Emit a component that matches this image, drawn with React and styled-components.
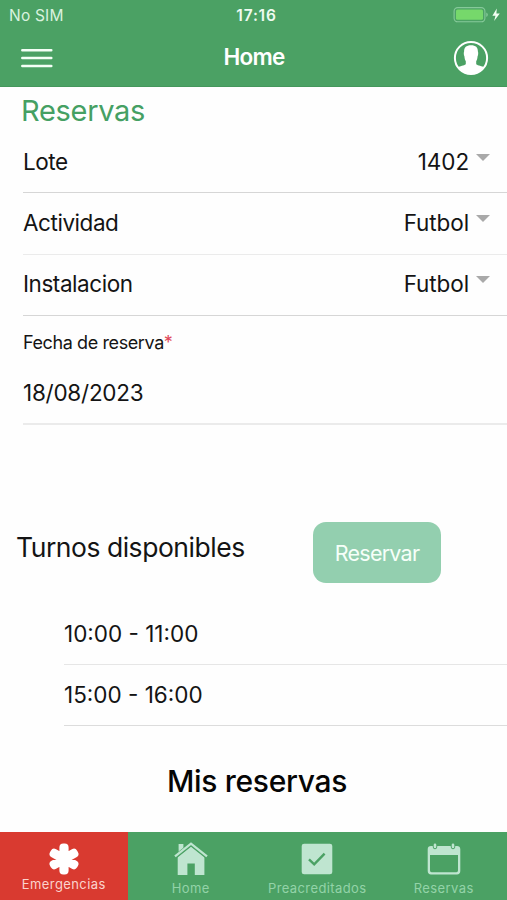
import React from 'react';
import styled, { createGlobalStyle } from 'styled-components';

const GlobalStyle = createGlobalStyle`
  * {
    box-sizing: border-box;
  }

  body {
    margin: 0;
    background: #fefefe;
    color: #141414;
    font-family: Inter, "Liberation Sans", sans-serif;
  }
`;

const selects = [
  { label: 'Lote', value: '1402', line: '#d6d6d6' },
  { label: 'Actividad', value: 'Futbol', line: '#ebebeb' },
  { label: 'Instalacion', value: 'Futbol', line: '#d6d6d6' },
];

const slots = [
  { time: '10:00 - 11:00', line: '#e6e6e6' },
  { time: '15:00 - 16:00', line: '#dcdcdc' },
];

// ****** icons ****** //
const BatteryIcon = () => (
  <svg width="48" height="18" viewBox="0 0 48 18">
    <rect x="1.1" y="1.6" width="30.8" height="14.2" rx="3.6" fill="none" stroke="#86c99a" strokeWidth="1.1" />
    <rect x="3" y="3.6" width="27" height="10.2" rx="1.6" fill="#76d86b" />
    <path d="M33.4 6.5 C35.2 7.2 35.2 10.2 33.4 10.9 Z" fill="#8ecfa0" />
    <path d="M43.8 2.6 L39.4 9.8 H42.5 L41.1 15 L46.8 7.5 H43.4 Z" fill="#f2fff2" />
  </svg>
);

const MenuIcon = () => (
  <svg width="33" height="22" viewBox="0 0 33 22" stroke="#f4fff6" strokeWidth="2.5" strokeLinecap="round">
    <path d="M2.3 3.3 H31.3 M2.3 11.1 H31.3 M2.3 19 H31.3" />
  </svg>
);

const ProfileIcon = () => (
  <svg width="36" height="36" viewBox="0 0 36 36">
    <circle cx="18" cy="18" r="16.1" fill="none" stroke="#fff" strokeWidth="2" />
    <path
      d="M18 5.2 C22.8 5.2 24.9 7.4 24.9 11.4 C25.4 12.6 25.3 14.8 24.6 16.2 C24.4 18.6 24 20 23.2 21.2 V24 C23.6 25.3 27.6 25.8 30.6 27 C27.8 31.4 23.4 34 18 34 S8.2 31.4 5.4 27 C8.4 25.8 12.4 25.3 12.8 24 V21.2 C12 20 11.6 18.6 11.4 16.2 C10.7 14.8 10.6 12.6 11.1 11.4 C11.1 7.4 13.2 5.2 18 5.2 Z"
      fill="#fff"
    />
  </svg>
);

const MedicalIcon = () => (
  <svg width="32" height="34" viewBox="0 0 32 34" stroke="#fff" strokeWidth="7.8" strokeLinejoin="round">
    <path d="M15.3 5.4 H16.7 V28.6 H15.3 Z M5.5 11.9 L6.2 10.7 L26.5 22.1 L25.8 23.3 Z M25.8 10.7 L26.5 11.9 L6.2 23.3 L5.5 22.1 Z" fill="#fff" />
  </svg>
);

const HouseIcon = () => (
  <svg width="34" height="34" viewBox="0 0 34 34" fill="#bfe5d0">
    <path d="M3.7 14.8 L17 4.2 L30.4 14.8 V33 H20.8 V21.4 H13.4 V33 H3.7 Z" />
    <path d="M4.6 2 H9.4 V7 L4.6 10.6 Z" />
    <path d="M1 15 L17 2.2 L33 15" fill="none" stroke="#4ba164" strokeWidth="4" />
    <path d="M1 14.4 L17 1.6 L33 14.4" fill="none" stroke="#bfe5d0" strokeWidth="2.3" />
  </svg>
);

const CheckIcon = () => (
  <svg width="32" height="32" viewBox="0 0 32 32">
    <rect x="0.7" y="0.7" width="30.6" height="30.6" rx="2.4" fill="#bfe5d0" />
    <path d="M8 16.4 L13.2 21.4 L23.6 10.6" fill="none" stroke="#4ba164" strokeWidth="2.4" />
  </svg>
);

const CalendarIcon = () => (
  <svg width="34" height="32" viewBox="0 0 34 32">
    <path
      d="M4 3 H5.7 C5.7 7.4 10.3 7.4 10.3 3 H23.7 C23.7 7.4 28.3 7.4 28.3 3 H30 C32 3 33.3 4.2 33.3 6.2 V28 C33.3 30.2 32 31.4 30 31.4 H4 C2 31.4 0.7 30.2 0.7 28 V6.2 C0.7 4.2 2 3 4 3 Z M3 12 V27.6 Q3 29.2 4.6 29.2 H29.4 Q31 29.2 31 27.6 V12 Z"
      fill="#bfe5d0"
      fillRule="evenodd"
    />
    <path d="M8 1.7 V4 M26 1.7 V4" stroke="#bfe5d0" strokeWidth="2.6" strokeLinecap="round" />
  </svg>
);

const tabs = [
  { label: 'Emergencias', icon: <MedicalIcon />, alert: true },
  { label: 'Home', icon: <HouseIcon /> },
  { label: 'Preacreditados', icon: <CheckIcon /> },
  { label: 'Reservas', icon: <CalendarIcon /> },
];

const App = () => {
  return (
    <Screen>
      <GlobalStyle />
      <Header>
        <StatusBar>
          <Carrier>No SIM</Carrier>
          <Clock>17:16</Clock>
          <BatteryIcon />
        </StatusBar>
        <NavBar>
          <MenuIcon />
          <NavTitle>Home</NavTitle>
          <ProfileIcon />
        </NavBar>
      </Header>

      <Content>
        <PageTitle>Reservas</PageTitle>
        <Form>
          {selects.map((item) => (
            <SelectRow key={item.label} $line={item.line}>
              <Label>{item.label}</Label>
              <Value>{item.value}</Value>
              <Caret />
            </SelectRow>
          ))}
          <DateField>
            <DateLabel>
              Fecha de reserva<span>*</span>
            </DateLabel>
            <DateValue>18/08/2023</DateValue>
          </DateField>
        </Form>

        <SlotsHeader>
          <SlotsTitle>Turnos disponibles</SlotsTitle>
          <ReserveButton type="button">Reservar</ReserveButton>
        </SlotsHeader>
        <SlotList>
          {slots.map((slot) => (
            <Slot key={slot.time} $line={slot.line}>
              {slot.time}
            </Slot>
          ))}
        </SlotList>

        <BookingsTitle>Mis reservas</BookingsTitle>
      </Content>

      <TabBar>
        {tabs.map((tab) => (
          <Tab key={tab.label} $alert={tab.alert}>
            <TabIcon>{tab.icon}</TabIcon>
            <TabLabel $alert={tab.alert}>{tab.label}</TabLabel>
          </Tab>
        ))}
      </TabBar>
    </Screen>
  );
};

const Screen = styled.div`
  display: flex;
  flex-direction: column;
  width: 507px;
  height: 900px;
  overflow: hidden;
`;

const Header = styled.header`
  height: 87px;
  background: #4ba164;
  border-bottom: 1px solid #45975c;
  color: #fff;
`;

const StatusBar = styled.div`
  display: grid;
  grid-template-columns: 1fr auto 1fr;
  align-items: center;
  height: 30px;
  padding: 0 6px 0 9px;

  svg {
    justify-self: end;
  }
`;

const Carrier = styled.span`
  color: #d9f2df;
  font-size: 15.5px;
  letter-spacing: 0.2px;
`;

const Clock = styled.span`
  padding-left: 3px;
  color: #effbf1;
  font-size: 15.5px;
  font-weight: 600;
  letter-spacing: 0.8px;
`;

const NavBar = styled.div`
  display: flex;
  align-items: center;
  justify-content: space-between;
  height: 56px;
  padding: 0 18px 0 20px;
`;

const NavTitle = styled.h1`
  margin: 0 0 3px 2px;
  font-size: 22.5px;
  font-weight: 600;
  letter-spacing: -0.7px;
`;

const Content = styled.main`
  flex: 1;
`;

const PageTitle = styled.h2`
  height: 45px;
  margin: 0;
  padding-left: 21px;
  color: #45a063;
  font-size: 29px;
  font-weight: 400;
  line-height: 47px;
  letter-spacing: -0.3px;
`;

const Form = styled.section`
  padding-left: 23px;
`;

const SelectRow = styled.div`
  display: flex;
  align-items: center;
  height: 61.4px;
  padding-right: 17px;
  border-bottom: 1.5px solid ${(props) => props.$line};
  font-size: 22.5px;
`;

const Label = styled.span`
  flex: 1;
  margin-bottom: 2px;
  letter-spacing: -0.45px;
`;

const Value = styled.span`
  margin: 0 7px 2px 0;
  letter-spacing: -0.1px;
`;

const Caret = styled.span`
  margin-bottom: 10px;
  border-top: 7.5px solid #a9a9a9;
  border-right: 7px solid transparent;
  border-left: 7px solid transparent;
`;

const DateField = styled.div`
  height: 108.5px;
  padding-top: 15px;
  border-bottom: 2px solid #ebebeb;
`;

const DateLabel = styled.div`
  font-size: 18px;
  line-height: 24px;
  letter-spacing: -0.4px;

  span {
    color: #e0485a;
  }
`;

const DateValue = styled.div`
  margin-top: 22px;
  font-size: 22.5px;
  line-height: 32px;
  letter-spacing: -0.25px;
`;

const SlotsHeader = styled.section`
  display: flex;
  align-items: flex-start;
  justify-content: space-between;
  margin-top: 97px;
  padding: 0 66px 0 16px;
`;

const SlotsTitle = styled.h3`
  margin: 0;
  font-size: 26.5px;
  font-weight: 400;
  line-height: 51px;
  letter-spacing: -0.47px;
`;

const ReserveButton = styled.button`
  width: 128px;
  height: 61px;
  padding: 2px 0 0;
  border: none;
  border-radius: 13px;
  background: #93cfaf;
  color: #f6fff9;
  font-family: inherit;
  font-size: 21.5px;
  letter-spacing: -0.75px;
`;

const SlotList = styled.div`
  margin-top: 21px;
  padding-left: 64px;
`;

const Slot = styled.div`
  height: 61.3px;
  border-bottom: 1.5px solid ${(props) => props.$line};
  font-size: 22.5px;
  line-height: 60px;
`;

const BookingsTitle = styled.h2`
  margin: 34px 0 0;
  padding-left: 7px;
  color: #050505;
  font-size: 30px;
  font-weight: 500;
  line-height: 42px;
  letter-spacing: -0.3px;
  text-align: center;
`;

const TabBar = styled.nav`
  display: grid;
  grid-template-columns: 127.5px 126.5px 126.5px 126.5px;
  height: 68px;
`;

const Tab = styled.div`
  display: flex;
  flex-direction: column;
  align-items: center;
  padding-top: 10px;
  background: ${(props) => (props.$alert ? '#d93a30' : '#4ba164')};
`;

const TabIcon = styled.div`
  display: flex;
  align-items: center;
  justify-content: center;
  height: 34px;
`;

const TabLabel = styled.span`
  margin-top: ${(props) => (props.$alert ? '0' : '4px')};
  color: ${(props) => (props.$alert ? '#fbd3cd' : '#93d3a8')};
  font-size: 13px;
  line-height: 17px;
  letter-spacing: 0.4px;
`;

export default App;
